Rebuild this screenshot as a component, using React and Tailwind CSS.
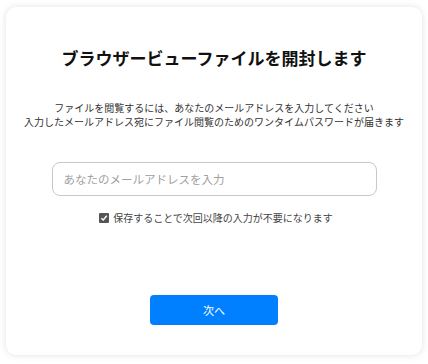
import React, { useState } from 'react';

const FONT = { fontFamily: '"Noto Sans CJK JP", "Noto Sans", sans-serif' };

const App = () => {
    const [email, setEmail] = useState('');
    const [remember, setRemember] = useState(true);

    return (
        <div className="min-h-[364px] w-[428px] bg-white pt-[7px]" style={FONT}>
            <div className="mx-[6px] flex h-[348px] w-[416px] flex-col items-center rounded-[10px] bg-white pt-[39px] shadow-[0_0_6px_rgba(140,150,180,0.28)]">
                <h1 className="text-[17px] font-bold leading-[24px] text-[#111]">ブラウザービューファイルを開封します</h1>

                <p className="mt-[31px] text-center text-[10px] leading-[14px] text-[#333]">
                    ファイルを閲覧するには、あなたのメールアドレスを入力してください
                    <br />
                    入力したメールアドレス宛にファイル閲覧のためのワンタイムパスワードが届きます
                </p>

                <input
                    type="email"
                    value={email}
                    onChange={(e) => setEmail(e.target.value)}
                    placeholder="あなたのメールアドレスを入力"
                    className="mt-[33px] h-[34px] w-[325px] rounded-[8px] border border-[#c8c8c8] px-[11px] text-[11.5px] text-[#333] outline-none placeholder:text-[#a0a0a0]"
                />

                <label className="mt-[15px] flex items-center gap-[4px] pl-[4px] text-[10px] leading-[14px] text-[#444]">
                    <span
                        onClick={() => setRemember(!remember)}
                        className="flex h-[10px] w-[10px] items-center justify-center rounded-[1px] bg-[#555]"
                    >
                        {remember && (
                            <svg width="8" height="8" viewBox="0 0 8 8">
                                <path d="M1.3 4.2 L3.2 6 L6.8 1.8" fill="none" stroke="white" strokeWidth="1.4" />
                            </svg>
                        )}
                    </span>
                    保存することで次回以降の入力が不要になります
                </label>

                <button className="mt-[70px] h-[30px] w-[128px] rounded-[4px] bg-[#0080ff] text-[11px] text-white">次へ</button>
            </div>
        </div>
    );
};

export default App;
